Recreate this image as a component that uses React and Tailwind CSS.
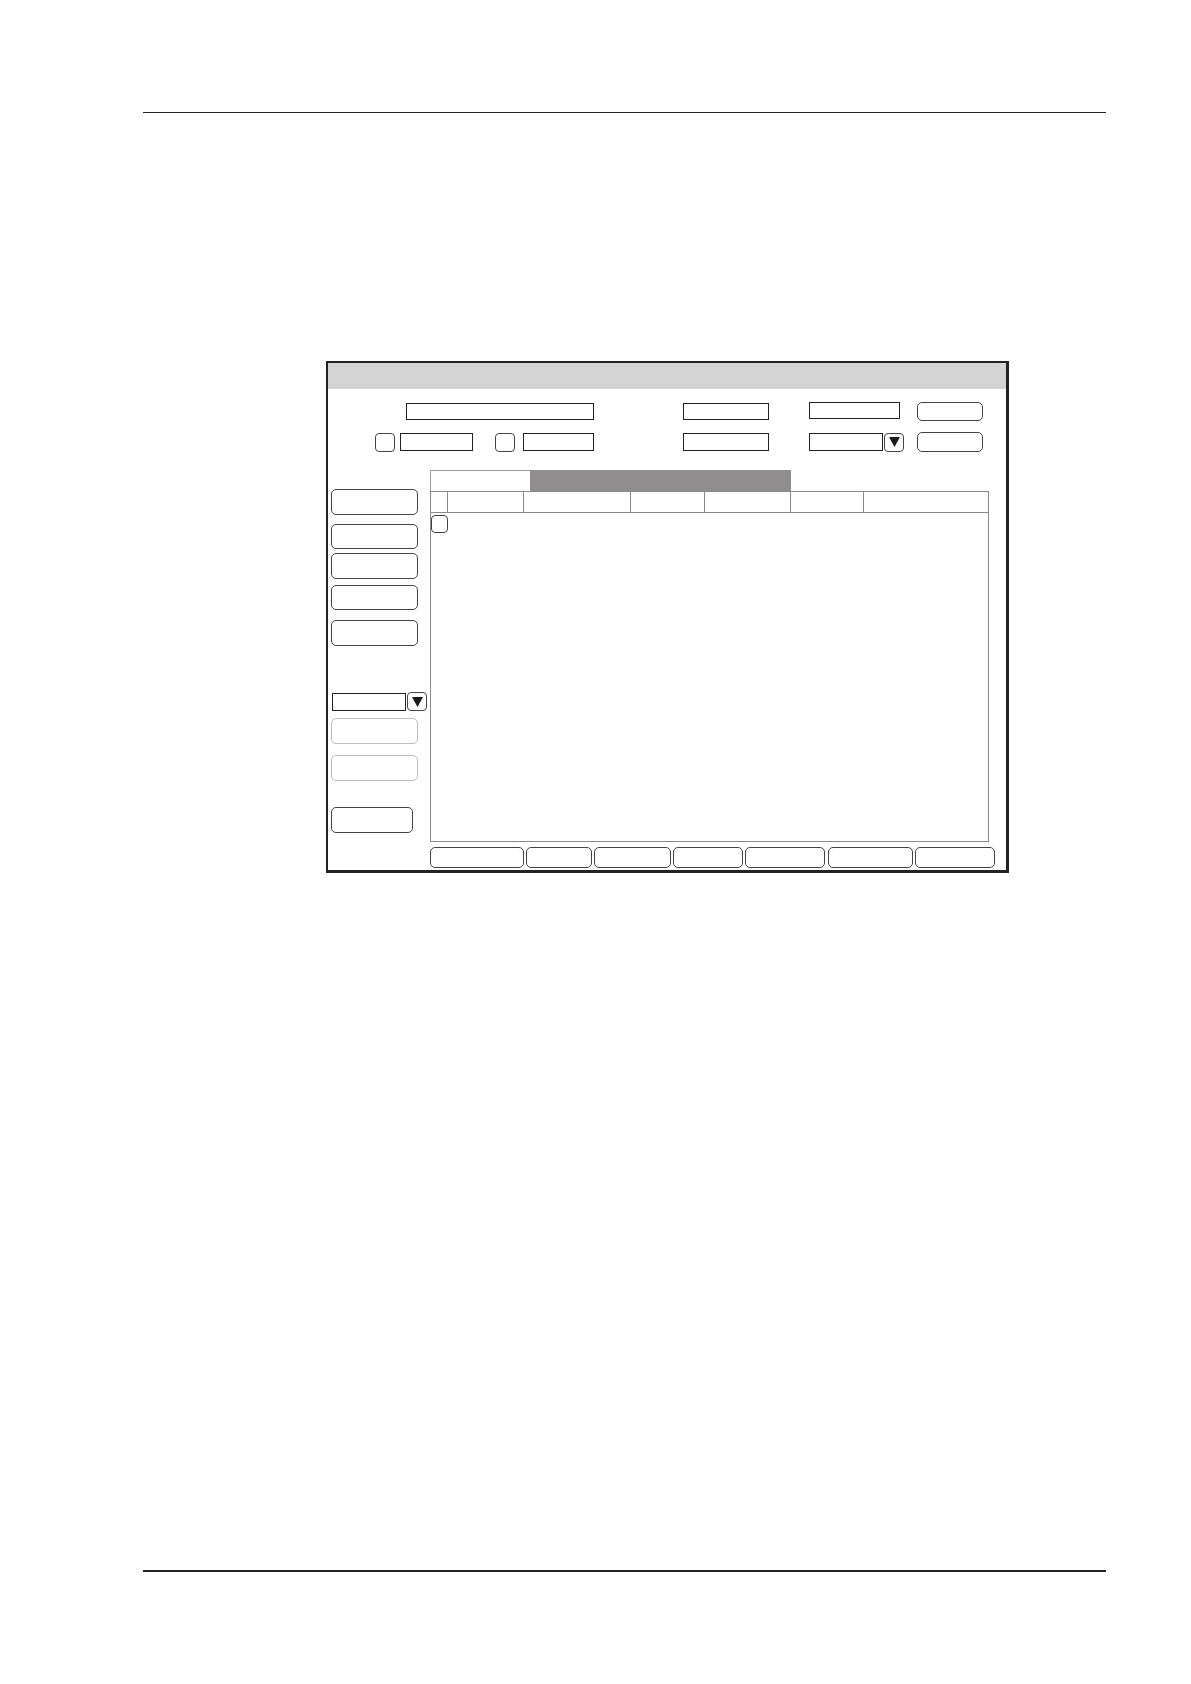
import React from 'react';

const inputCls = 'shrink-0 border-[1.5px] border-[#222] bg-white';
const checkCls = 'shrink-0 rounded-[4px] border-[1.5px] border-[#444] bg-white';
const btnCls = 'shrink-0 rounded-[5px] border-[1.5px] border-[#444] bg-white';
const offCls = 'shrink-0 rounded-[5px] border-[1.5px] border-[#bdbdbd] bg-white';

const headerCols = [17, 76, 107, 74, 86, 73, 124];

const bottomButtons = [
  { w: 'w-[94px]', ml: 'ml-0' },
  { w: 'w-[66px]', ml: 'ml-[2px]' },
  { w: 'w-[77px]', ml: 'ml-[2px]' },
  { w: 'w-[70px]', ml: 'ml-[2px]' },
  { w: 'w-[80px]', ml: 'ml-[2px]' },
  { w: 'w-[85px]', ml: 'ml-[3px]' },
  { w: 'w-[80px]', ml: 'ml-[2px]' },
];

const ArrowButton = ({ className = '' }) => (
  <div
    className={`shrink-0 flex items-center justify-center rounded-[4px] border-[1.5px] border-[#444] bg-white w-[20px] h-[19px] ${className}`}
  >
    <svg width="11" height="10" viewBox="0 0 11 10">
      <polygon points="0,0 11,0 5.5,10" fill="#1a1a1a" />
    </svg>
  </div>
);

const App = () => {
  return (
    <div className="w-[1191px] h-[1684px] bg-white overflow-hidden">
      {/* header rule */}
      <div className="pt-[112px] pl-[143px]">
        <div className="w-[963px] h-px bg-[#222]" />
      </div>

      {/* dialog */}
      <div className="mt-[248px] ml-[326px] w-[683px] h-[512px] border-l-2 border-t-2 border-r-[3px] border-b-[3px] border-[#222] bg-white flex flex-col">
        <div className="h-[26px] bg-[#d4d4d4]" />

        {/* top form row 1 */}
        <div className="mt-[12px] h-[20px] flex items-center">
          <div className={`${inputCls} ml-[78px] w-[188px] h-[17px]`} />
          <div className={`${inputCls} ml-[89px] w-[86px] h-[17px]`} />
          <div className={`${inputCls} ml-[40px] w-[91px] h-[17px] -translate-y-px`} />
          <div className={`${btnCls} ml-[17px] w-[66px] h-[19px]`} />
        </div>

        {/* top form row 2 */}
        <div className="mt-[11px] h-[20px] flex items-center">
          <div className={`${checkCls} ml-[47px] w-[20px] h-[19px]`} />
          <div className={`${inputCls} ml-[5px] w-[73px] h-[18px]`} />
          <div className={`${checkCls} ml-[22px] w-[20px] h-[19px]`} />
          <div className={`${inputCls} ml-[8px] w-[71px] h-[18px]`} />
          <div className={`${inputCls} ml-[89px] w-[86px] h-[18px]`} />
          <div className={`${inputCls} ml-[40px] w-[74px] h-[18px]`} />
          <ArrowButton className="ml-px" />
          <div className={`${btnCls} ml-[13px] w-[66px] h-[20px]`} />
        </div>

        {/* main area */}
        <div className="mt-[18px] flex">
          {/* left column */}
          <div className="ml-[3px] w-[97px] flex flex-col">
            <div className={`${btnCls} mt-[19px] w-[87px] h-[26px]`} />
            <div className={`${btnCls} mt-[9px] w-[87px] h-[25px]`} />
            <div className={`${btnCls} mt-[4px] w-[87px] h-[26px]`} />
            <div className={`${btnCls} mt-[6px] w-[87px] h-[25px]`} />
            <div className={`${btnCls} mt-[10px] w-[87px] h-[26px]`} />
            <div className="mt-[46px] h-[19px] flex items-center">
              <div className={`${inputCls} ml-px w-[74px] h-[18px]`} />
              <ArrowButton className="ml-px" />
            </div>
            <div className={`${offCls} mt-[7px] w-[87px] h-[26px]`} />
            <div className={`${offCls} mt-[11px] w-[87px] h-[26px]`} />
            <div className={`${btnCls} mt-[26px] w-[82px] h-[26px]`} />
          </div>

          {/* right column */}
          <div className="ml-[2px] w-[568px] flex flex-col">
            {/* tabs */}
            <div className="h-[21px] flex">
              <div className="w-[100px] border-t border-l border-[#9a9a9a] bg-white" />
              <div className="w-[261px] bg-[#8f8d8d]" />
            </div>

            {/* table */}
            <div className="w-[559px] border border-[#8a8a8a] flex flex-col">
              <div className="h-[21px] flex border-b border-[#8a8a8a]">
                {headerCols.map((w, i) => (
                  <div
                    key={i}
                    className={i < headerCols.length - 1 ? 'h-full border-r border-[#8a8a8a]' : 'h-full'}
                    style={{ width: w }}
                  />
                ))}
              </div>
              <div className="h-[328px] pt-[2px]">
                <div className={`${checkCls} w-[17px] h-[18px]`} />
              </div>
            </div>

            {/* bottom buttons */}
            <div className="mt-[5px] flex">
              {bottomButtons.map((b, i) => (
                <div key={i} className={`${btnCls} ${b.w} ${b.ml} h-[21px]`} />
              ))}
            </div>
          </div>
        </div>
      </div>

      {/* footer rule */}
      <div className="mt-[697px] ml-[143px] w-[963px] h-[2px] bg-[#222]" />
    </div>
  );
};

export default App;
